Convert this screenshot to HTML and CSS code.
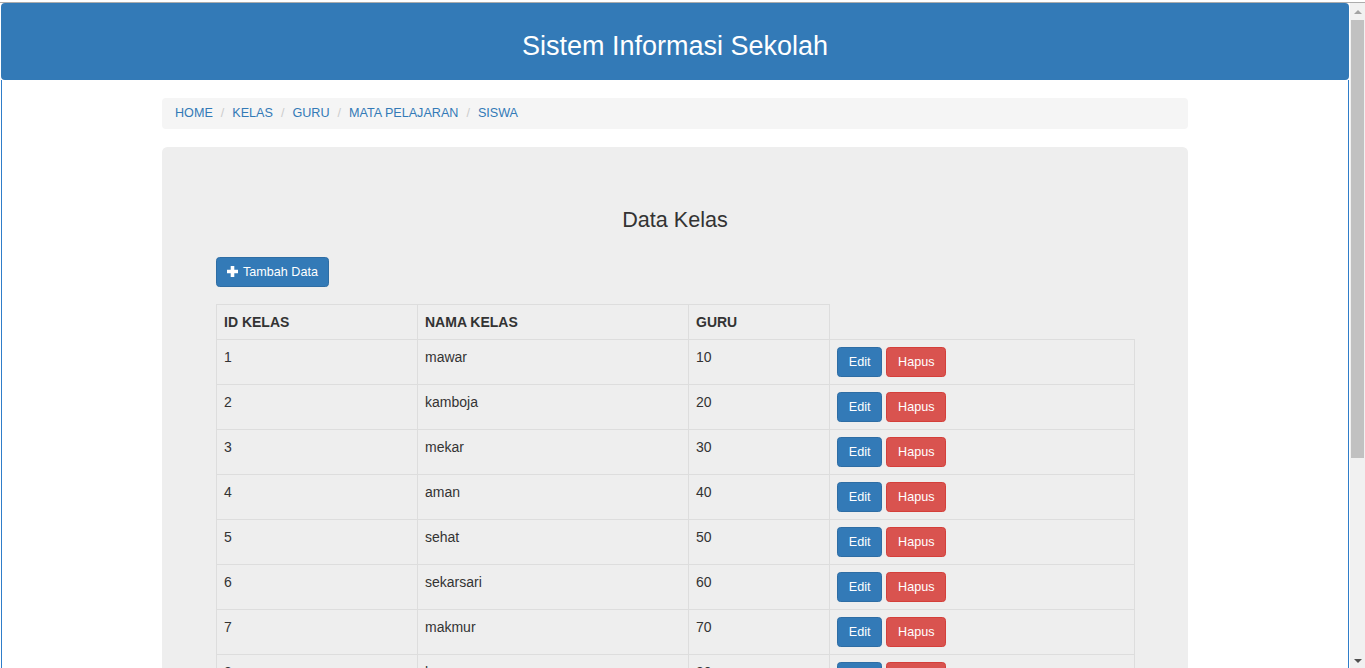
FILE: index.html
```html
<!DOCTYPE html>
<html lang="id">
<head>
<meta charset="utf-8">
<title>Sistem Informasi Sekolah</title>
<link rel="stylesheet" href="styles.css">
</head>
<body>
<div class="topline"></div>
<div class="window">
  <div class="frame">
    <header class="site-header">
      <h1 class="site-title">Sistem Informasi Sekolah</h1>
    </header>
    <div class="page">
      <div class="container">
        <ol class="breadcrumb">
          <li><a href="#">HOME</a></li>
          <li><a href="#">KELAS</a></li>
          <li><a href="#">GURU</a></li>
          <li><a href="#">MATA PELAJARAN</a></li>
          <li><a href="#">SISWA</a></li>
        </ol>
        <div class="jumbotron">
          <h3 class="section-title">Data Kelas</h3>
          <div class="toolbar">
            <button class="btn btn-primary btn-add"><svg class="icon-plus" viewBox="0 0 11 11" width="11" height="11"><path d="M3.7 0h3.6v3.7H11v3.6H7.3V11H3.7V7.3H0V3.7h3.7z" fill="#fff"/></svg><span>Tambah Data</span></button>
          </div>
          <table class="data-table">
            <colgroup>
              <col class="c1"><col class="c2"><col class="c3"><col class="c4">
            </colgroup>
            <thead>
              <tr><th>ID KELAS</th><th>NAMA KELAS</th><th>GURU</th></tr>
            </thead>
            <tbody>
              <tr><td>1</td><td>mawar</td><td>10</td><td><div class="actions"><button class="btn btn-primary">Edit</button><button class="btn btn-danger">Hapus</button></div></td></tr>
              <tr><td>2</td><td>kamboja</td><td>20</td><td><div class="actions"><button class="btn btn-primary">Edit</button><button class="btn btn-danger">Hapus</button></div></td></tr>
              <tr><td>3</td><td>mekar</td><td>30</td><td><div class="actions"><button class="btn btn-primary">Edit</button><button class="btn btn-danger">Hapus</button></div></td></tr>
              <tr><td>4</td><td>aman</td><td>40</td><td><div class="actions"><button class="btn btn-primary">Edit</button><button class="btn btn-danger">Hapus</button></div></td></tr>
              <tr><td>5</td><td>sehat</td><td>50</td><td><div class="actions"><button class="btn btn-primary">Edit</button><button class="btn btn-danger">Hapus</button></div></td></tr>
              <tr><td>6</td><td>sekarsari</td><td>60</td><td><div class="actions"><button class="btn btn-primary">Edit</button><button class="btn btn-danger">Hapus</button></div></td></tr>
              <tr><td>7</td><td>makmur</td><td>70</td><td><div class="actions"><button class="btn btn-primary">Edit</button><button class="btn btn-danger">Hapus</button></div></td></tr>
              <tr><td>8</td><td>kenanga</td><td>80</td><td><div class="actions"><button class="btn btn-primary">Edit</button><button class="btn btn-danger">Hapus</button></div></td></tr>
            </tbody>
          </table>
        </div>
      </div>
    </div>
  </div>
  <div class="scrollbar">
    <div class="sb-up"></div>
    <div class="sb-thumb"></div>
    <div class="sb-space"></div>
    <div class="sb-down"></div>
  </div>
</div>
</body>
</html>
```
FILE: styles.css
```css
html, body {
  margin: 0;
  height: 100%;
  overflow: hidden;
  background: #fff;
  font-family: "Liberation Sans", Arial, sans-serif;
  color: #333;
}

.topline {
  height: 3px;
  box-sizing: border-box;
  border-bottom: 1px solid #acacac;
}

.window {
  display: flex;
  height: 665px;
}

.frame {
  margin-left: 1px;
  width: 1348px;
  display: flex;
  flex-direction: column;
  overflow: hidden;
}

.site-header {
  flex-shrink: 0;
  height: 77px;
  box-sizing: border-box;
  padding-top: 29px;
  background: #337ab7;
  border-radius: 4px;
  text-align: center;
}

.site-title {
  margin: 0;
  font-size: 27px;
  line-height: 29.7px;
  font-weight: normal;
  color: #fff;
}

.page {
  flex: 1;
  min-height: 0;
  overflow: hidden;
  border-left: 1px solid #2f7dc9;
  border-right: 1px solid #2f7dc9;
  display: flex;
  justify-content: center;
  padding-top: 18px;
}

.container {
  width: 1026px;
  flex-shrink: 0;
}

.breadcrumb {
  list-style: none;
  margin: 0 0 18px;
  padding: 7px 13px;
  background: #f5f5f5;
  border-radius: 4px;
  font-size: 12.6px;
  line-height: 17px;
}

.breadcrumb li {
  display: inline-block;
}

.breadcrumb li + li::before {
  content: "/\00a0";
  padding: 0 4.5px;
  color: #ccc;
}

.breadcrumb a {
  color: #337ab7;
  text-decoration: none;
}

.jumbotron {
  background: #eee;
  border-radius: 5.4px;
  padding: 43px 54px 48px;
}

.section-title {
  margin: 18px 0 25px;
  font-size: 21.6px;
  line-height: 24px;
  font-weight: 500;
  text-align: center;
  color: #333;
}

.toolbar {
  display: flex;
  margin-bottom: 17px;
}

.btn {
  display: inline-flex;
  align-items: center;
  height: 30px;
  box-sizing: border-box;
  padding: 0 10.8px 1px;
  font-family: inherit;
  font-size: 12.6px;
  line-height: 18px;
  border: 1px solid transparent;
  border-radius: 3.6px;
  color: #fff;
  cursor: pointer;
}

.btn-primary {
  background: #337ab7;
  border-color: #2e6da4;
}

.btn-danger {
  background: #d9534f;
  border-color: #d43f3a;
}

.btn-add {
  padding: 0 10.5px 1px 10px;
}

.icon-plus {
  margin-right: 5px;
  margin-top: -1px;
}

.data-table {
  width: 100%;
  border-collapse: collapse;
  table-layout: fixed;
  font-size: 14px;
  line-height: 20px;
}

.c1 { width: 201px; }
.c2 { width: 271px; }
.c3 { width: 141px; }
.c4 { width: 305px; }

.data-table th,
.data-table td {
  border: 1px solid #ddd;
  padding: 7px;
  text-align: left;
  vertical-align: top;
  color: #333;
}

.data-table th {
  font-weight: bold;
  vertical-align: bottom;
}

.actions {
  display: flex;
  gap: 4px;
}

.scrollbar {
  margin-left: 1px;
  width: 15px;
  background: #f1f1f1;
  display: flex;
  flex-direction: column;
  align-items: center;
}

.sb-up {
  margin-top: 7px;
  width: 0;
  height: 0;
  border-left: 4px solid transparent;
  border-right: 4px solid transparent;
  border-bottom: 4px solid #a3a3a3;
}

.sb-thumb {
  margin-top: 6px;
  width: 13px;
  height: 438px;
  background: #c1c1c1;
}

.sb-space {
  flex: 1;
}

.sb-down {
  margin-bottom: 5px;
  width: 0;
  height: 0;
  border-left: 4px solid transparent;
  border-right: 4px solid transparent;
  border-top: 4px solid #505050;
}
```
